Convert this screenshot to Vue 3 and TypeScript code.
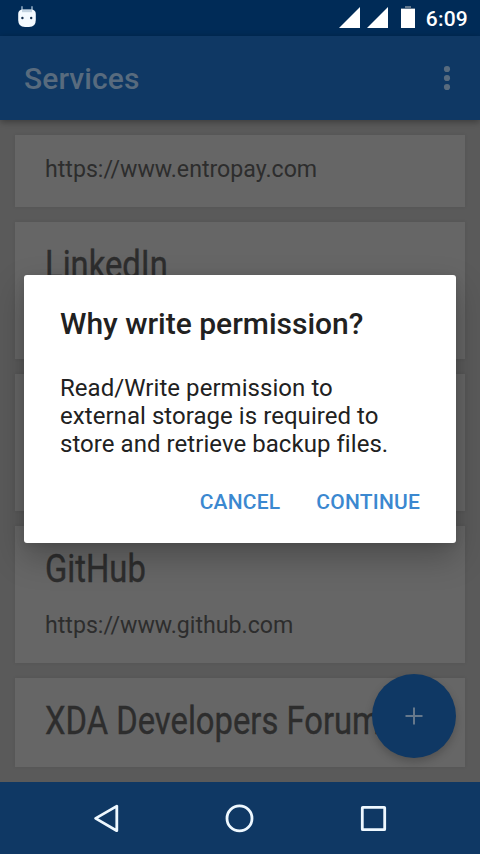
<script setup lang="ts">
interface Service {
  id: number
  name?: string
  url?: string
  kind: 'short' | 'full' | 'last'
}

const services: Service[] = [
  { id: 1, url: 'https://www.entropay.com', kind: 'short' },
  { id: 2, name: 'LinkedIn', kind: 'full' },
  { id: 3, kind: 'full' },
  { id: 4, name: 'GitHub', url: 'https://www.github.com', kind: 'full' },
  { id: 5, name: 'XDA Developers Forum', kind: 'last' },
]
</script>

<template>
  <div class="screen">
    <header class="status">
      <svg class="droid" width="20" height="24" viewBox="0 0 20 24">
        <path d="M5 1.2V6M15 1.2V6" stroke="#9fb8ce" stroke-width="1.4" />
        <path d="M1.2 9Q1.2 4.5 6 4.5H14Q18.8 4.5 18.8 9V15Q18.8 22 12 22H8Q1.2 22 1.2 15Z" fill="#f4faff" />
        <path d="M5 6H15" stroke="#c3d3e1" stroke-width="2.4" />
        <circle cx="5.4" cy="13" r="1.2" fill="#14304f" />
        <circle cx="14.2" cy="13" r="1.2" fill="#14304f" />
      </svg>
      <div class="indicators">
        <svg width="21" height="21" viewBox="0 0 21 21"><path d="M0 21L21 0V21Z" fill="#fff" /></svg>
        <svg class="second" width="21" height="21" viewBox="0 0 21 21"><path d="M0 21L21 0V21Z" fill="#fff" /></svg>
        <svg class="battery" width="14" height="22" viewBox="0 0 14 22">
          <path d="M4 0H10V2H14V4H0V2H4Z" fill="#62788e" />
          <path d="M0 3H14V22H0Z" fill="#fff" />
        </svg>
        <span class="clock">6:09</span>
      </div>
    </header>

    <div class="toolbar">
      <h1>Services</h1>
      <svg width="8" height="26" viewBox="0 0 8 26" fill="#586b7e">
        <circle cx="4" cy="4" r="3.1" /><circle cx="4" cy="13" r="3.1" /><circle cx="4" cy="22" r="3.1" />
      </svg>
    </div>

    <main class="list">
      <article v-for="s in services" :key="s.id" class="card" :class="s.kind">
        <h2 v-if="s.name"><span>{{ s.name }}</span></h2>
        <p v-if="s.url">{{ s.url }}</p>
      </article>
      <button class="fab" aria-label="Add">
        <svg width="18" height="18" viewBox="0 0 18 18"><path d="M9 .5V17.5M.5 9H17.5" stroke="#66788b" stroke-width="2" /></svg>
      </button>
    </main>

    <nav class="navbar">
      <svg width="30" height="30" viewBox="0 0 30 30"><path d="M4.6 15.4L25.8 3.1V27.7Z" /></svg>
      <svg width="30" height="30" viewBox="0 0 30 30"><circle cx="14.5" cy="15.4" r="12.5" /></svg>
      <svg width="30" height="30" viewBox="0 0 30 30"><rect x="3.3" y="4.3" width="22.4" height="22.4" rx=".5" /></svg>
    </nav>

    <section class="dialog" role="dialog">
      <h3>Why write permission?</h3>
      <p>Read/Write permission to<br />external storage is required to<br />store and retrieve backup files.</p>
      <div class="actions">
        <button>CANCEL</button>
        <button>CONTINUE</button>
      </div>
    </section>
  </div>
</template>

<style>
body {
  margin: 0;
}
</style>

<style scoped>
.screen {
  position: relative;
  display: flex;
  flex-direction: column;
  width: 480px;
  height: 854px;
  overflow: hidden;
  background: #5a5a5a;
  font-family: Roboto, 'Liberation Sans', sans-serif;
}
h1, h2, h3, p {
  margin: 0;
  font-weight: 400;
  white-space: nowrap;
}
button {
  border: 0;
  padding: 0;
  background: none;
  font: inherit;
}
svg {
  display: block;
  flex: none;
}
.status {
  display: flex;
  justify-content: space-between;
  height: 36px;
  background: #002b57;
}
.droid {
  margin: 5px 0 0 17px;
}
.indicators {
  display: flex;
  align-items: flex-start;
  padding: 7px 12px 0 0;
}
.second {
  margin-left: 7px;
}
.battery {
  margin: -1px 11px 0 13px;
}
.clock {
  color: #fff;
  font-size: 21px;
  font-weight: 500;
  line-height: 24px;
  letter-spacing: 0.2px;
}
.toolbar {
  position: relative;
  z-index: 1;
  display: flex;
  align-items: center;
  justify-content: space-between;
  height: 84px;
  padding: 0 29px 0 24px;
  box-sizing: border-box;
  background: #0f3864;
  box-shadow: 0 2px 7px rgba(0, 0, 0, 0.35);
}
.toolbar h1 {
  color: #586b7e;
  font-size: 30px;
  font-weight: 500;
  letter-spacing: 0.08px;
}
.list {
  position: relative;
  display: flex;
  flex-direction: column;
  gap: 15px;
  height: 662px;
  padding: 15px 15px 0;
  box-sizing: border-box;
}
.card {
  flex: none;
  height: 137px;
  padding: 19px 30px 0;
  box-sizing: border-box;
  background: #666;
  color: #2d2d2d;
  box-shadow: 0 0 4px rgba(0, 0, 0, 0.07);
}
.card.short {
  height: 72px;
  padding-top: 21px;
}
.card.last {
  height: 89px;
}
.card h2 {
  height: 48px;
  font-size: 39px;
  line-height: 48px;
}
.card h2 span {
  display: inline-block;
  transform: scaleX(0.84);
  transform-origin: left;
  -webkit-text-stroke: 0.4px #2d2d2d;
}
.card p {
  font-size: 23.15px;
  line-height: 28px;
}
.card h2 + p {
  margin-top: 19px;
}
.fab {
  position: absolute;
  right: 24px;
  bottom: 24px;
  display: grid;
  place-items: center;
  width: 84px;
  height: 84px;
  border-radius: 50%;
  background: #0f3864;
  box-shadow: 0 4px 8px rgba(0, 0, 0, 0.2);
}
.navbar {
  display: flex;
  justify-content: center;
  align-items: center;
  gap: 104px;
  height: 72px;
  background: #0f3864;
}
.navbar svg {
  fill: none;
  stroke: #eef8ff;
  stroke-width: 2.8;
  stroke-linejoin: round;
}
.dialog {
  position: absolute;
  z-index: 2;
  left: 24px;
  top: 275px;
  width: 432px;
  height: 268px;
  padding: 31px 36px 0;
  box-sizing: border-box;
  border-radius: 3px;
  background: #fff;
  color: #212121;
  box-shadow: 0 14px 32px rgba(0, 0, 0, 0.25), 0 2px 8px rgba(0, 0, 0, 0.1);
}
.dialog h3 {
  font-size: 30px;
  font-weight: 500;
  line-height: 36px;
}
.dialog p {
  margin-top: 32px;
  font-size: 24px;
  line-height: 28px;
  letter-spacing: 0.05px;
}
.actions {
  display: flex;
  justify-content: flex-end;
  gap: 36px;
  margin-top: 31px;
}
.actions button {
  color: #3b88d0;
  font-size: 21px;
  font-weight: 500;
  line-height: 26px;
  letter-spacing: 0.2px;
}
</style>
